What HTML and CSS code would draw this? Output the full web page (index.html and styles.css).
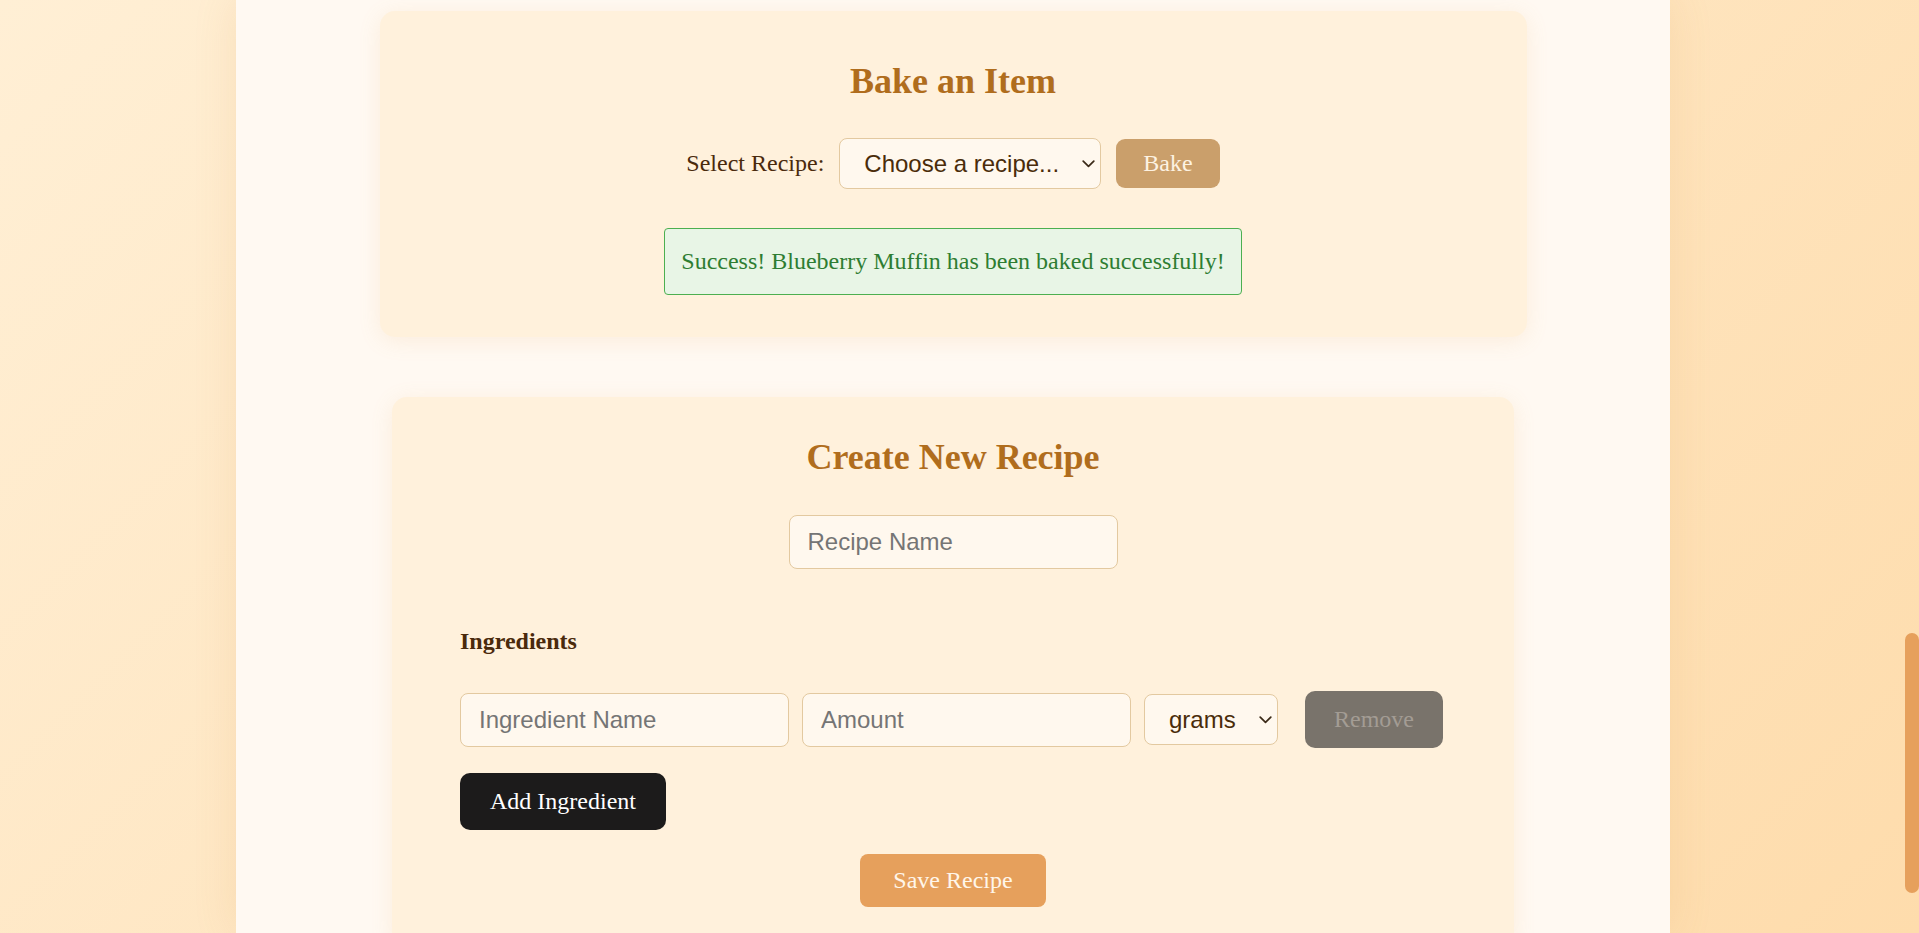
FILE: index.html
```html
<!DOCTYPE html>
<html lang="en">
<head>
<meta charset="utf-8">
<title>Bakery</title>
<link rel="stylesheet" href="styles.css">
</head>
<body>
<div class="page">
  <main class="container">
    <section class="card card-bake">
      <h2 class="card-title">Bake an Item</h2>
      <div class="bake-row">
        <label class="field-label" for="recipe">Select Recipe:</label>
        <span class="select-wrap">
          <select id="recipe" class="select select-recipe">
            <option>Choose a recipe...</option>
          </select>
          <svg class="chevron" viewBox="0 0 13 8" aria-hidden="true"><path d="M1.2 1.2 L6.5 6.4 L11.8 1.2"/></svg>
        </span>
        <button class="btn btn-bake">Bake</button>
      </div>
      <div class="message message-success">Success! Blueberry Muffin has been baked successfully!</div>
    </section>

    <section class="card card-create">
      <h2 class="card-title">Create New Recipe</h2>
      <div class="name-row">
        <input class="input" type="text" placeholder="Recipe Name">
      </div>
      <div class="ingredients">
        <h3 class="ingredients-title">Ingredients</h3>
        <div class="ingredient-row">
          <input class="input" type="text" placeholder="Ingredient Name">
          <input class="input" type="text" placeholder="Amount">
          <span class="select-wrap">
            <select class="select select-unit">
              <option>grams</option>
            </select>
            <svg class="chevron" viewBox="0 0 13 8" aria-hidden="true"><path d="M1.2 1.2 L6.5 6.4 L11.8 1.2"/></svg>
          </span>
          <button class="btn btn-remove" disabled>Remove</button>
        </div>
        <button class="btn btn-add">Add Ingredient</button>
      </div>
      <div class="save-row">
        <button class="btn btn-save">Save Recipe</button>
      </div>
    </section>
  </main>
</div>
<div class="scroll-thumb"></div>
</body>
</html>
```

FILE: styles.css
```css
html, body {
  margin: 0;
  height: 100%;
  overflow: hidden;
}

body {
  background: linear-gradient(135deg, #ffefd5 0%, #fedcac 100%);
  font-family: "Liberation Serif", "Times New Roman", serif;
  color: #4a2a0c;
}

.page {
  display: flex;
  justify-content: center;
  padding-left: 1px;
  padding-right: 14px;
  height: 100%;
}

.container {
  width: 1434px;
  flex-shrink: 0;
  background: #fff9f2;
  box-shadow: 0 0 40px rgba(214, 150, 70, 0.16);
  padding-top: 11px;
  display: flex;
  flex-direction: column;
  align-items: center;
  gap: 60px;
}

.card {
  background: #fff1dc;
  border-radius: 15px;
  box-shadow: 0 4px 22px rgba(225, 165, 95, 0.14);
  box-sizing: border-box;
  flex-shrink: 0;
}

.card-bake {
  width: 1147px;
  padding: 49px 40px 42px;
  text-align: center;
}

.card-create {
  width: 1122px;
  padding: 39px 68px 40px;
}

.card-title {
  margin: 0;
  font-size: 36px;
  line-height: normal;
  font-weight: bold;
  color: #b06d1d;
  text-align: center;
}

.card-bake .card-title {
  margin-bottom: 36px;
}

.card-create .card-title {
  margin-bottom: 37px;
}

.bake-row {
  display: flex;
  justify-content: center;
  align-items: center;
  gap: 15px;
  margin-bottom: 39px;
}

.field-label {
  font-size: 24px;
  color: #4a2a0c;
}

.select-wrap {
  position: relative;
  display: inline-flex;
}

.select {
  appearance: none;
  -webkit-appearance: none;
  font-family: "Liberation Sans", Arial, sans-serif;
  font-size: 24px;
  color: #4a2c0a;
  background: #fff8ee;
  border: 1px solid #e3c9a0;
  border-radius: 8px;
  height: 51px;
  padding: 0 22px 0 24px;
  box-sizing: border-box;
}

.select-recipe {
  width: 262px;
}

.select-unit {
  width: 134px;
}

.chevron {
  position: absolute;
  right: 6px;
  top: 50%;
  width: 13px;
  height: 8px;
  margin-top: -4px;
  pointer-events: none;
  fill: none;
  stroke: #3b2a18;
  stroke-width: 1.7;
  stroke-linecap: round;
  stroke-linejoin: round;
}

.input {
  font-family: "Liberation Sans", Arial, sans-serif;
  font-size: 24px;
  line-height: normal;
  color: #4a2c0a;
  background: #fff8ee;
  border: 1px solid #e3c9a0;
  border-radius: 8px;
  padding: 12px 18px;
  width: 329px;
  box-sizing: border-box;
}

.btn {
  font-family: "Liberation Serif", "Times New Roman", serif;
  font-size: 24px;
  line-height: normal;
  border: none;
  border-radius: 9px;
  cursor: pointer;
}

.btn-bake {
  background: #ca9f6b;
  color: #fdf2e2;
  padding: 11px 27px;
}

.message {
  width: fit-content;
  margin: 0 auto;
  font-size: 24px;
  line-height: normal;
  padding: 19px 16px;
  border-radius: 4px;
}

.message-success {
  background: #e8f5e6;
  border: 1px solid #4caf50;
  color: #2e7d32;
}

.name-row {
  display: flex;
  justify-content: center;
}

.ingredients {
  margin-top: 59px;
}

.ingredients-title {
  margin: 0 0 36px;
  font-size: 24px;
  line-height: normal;
  font-weight: bold;
  color: #4a2a0c;
}

.ingredient-row {
  display: flex;
  align-items: center;
  gap: 13px;
}

.btn-remove {
  margin-left: 14px;
  padding: 15px 29px;
  background: #79736b;
  color: #a39c94;
  border-radius: 10px;
  cursor: default;
}

.btn-add {
  margin-top: 25px;
  padding: 15px 30px;
  background: #1c1b1b;
  color: #ffffff;
  border-radius: 10px;
}

.save-row {
  display: flex;
  justify-content: center;
  margin-top: 24px;
}

.btn-save {
  padding: 13px 33px;
  background: #e6a05c;
  color: #fff6ea;
  border-radius: 8px;
}

.scroll-thumb {
  position: fixed;
  right: 0;
  top: 633px;
  width: 14px;
  height: 260px;
  border-radius: 7px;
  background: #e6a05c;
}
```
